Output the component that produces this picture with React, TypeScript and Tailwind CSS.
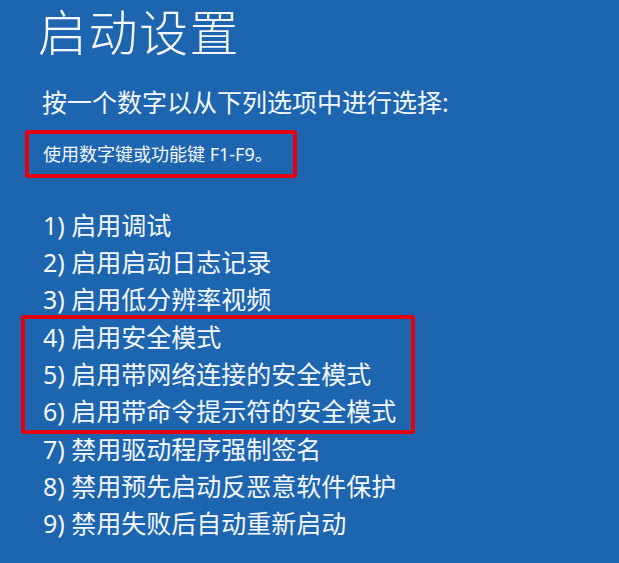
import React from "react";

const items = [
  "1) 启用调试",
  "2) 启用启动日志记录",
  "3) 启用低分辨率视频",
  "4) 启用安全模式",
  "5) 启用带网络连接的安全模式",
  "6) 启用带命令提示符的安全模式",
  "7) 禁用驱动程序强制签名",
  "8) 禁用预先启动反恶意软件保护",
  "9) 禁用失败后自动重新启动",
];

export default function App() {
  const font = { fontFamily: '"Noto Sans", "Noto Sans CJK SC", sans-serif' };
  return (
    <div
      className="w-[619px] h-[563px] bg-[#1e65b0] text-[#f4f7fb] overflow-hidden flex flex-col"
      style={font}
    >
      <div className="pl-[38px] pt-[4px] text-[49px] leading-[56px] font-light tracking-[1.5px]">
        启动设置
      </div>
      <div className="pl-[42px] mt-[26px] text-[25px] leading-[32px] font-normal">
        按一个数字以从下列选项中进行选择:
      </div>
      <div className="ml-[25px] mt-[12px] w-[272px] h-[48px] border-[4px] border-[#e3000f] rounded-[3px] flex items-center pl-[14px] text-[18px] font-normal">
        使用数字键或功能键 F1-F9。
      </div>
      <div className="mt-[29px] flex flex-col">
        {items.slice(0, 3).map((t) => (
          <div key={t} className="pl-[43px] text-[25px] leading-[37px] font-normal">
            {t}
          </div>
        ))}
        <div className="ml-[21px] -my-[3px] w-[394px] border-[4px] border-[#e3000f] rounded-[3px]">
          {items.slice(3, 6).map((t) => (
            <div key={t} className="pl-[18px] text-[25px] leading-[37px] font-normal">
              {t}
            </div>
          ))}
        </div>
        {items.slice(6).map((t) => (
          <div key={t} className="pl-[43px] text-[25px] leading-[37px] font-normal">
            {t}
          </div>
        ))}
      </div>
    </div>
  );
}
